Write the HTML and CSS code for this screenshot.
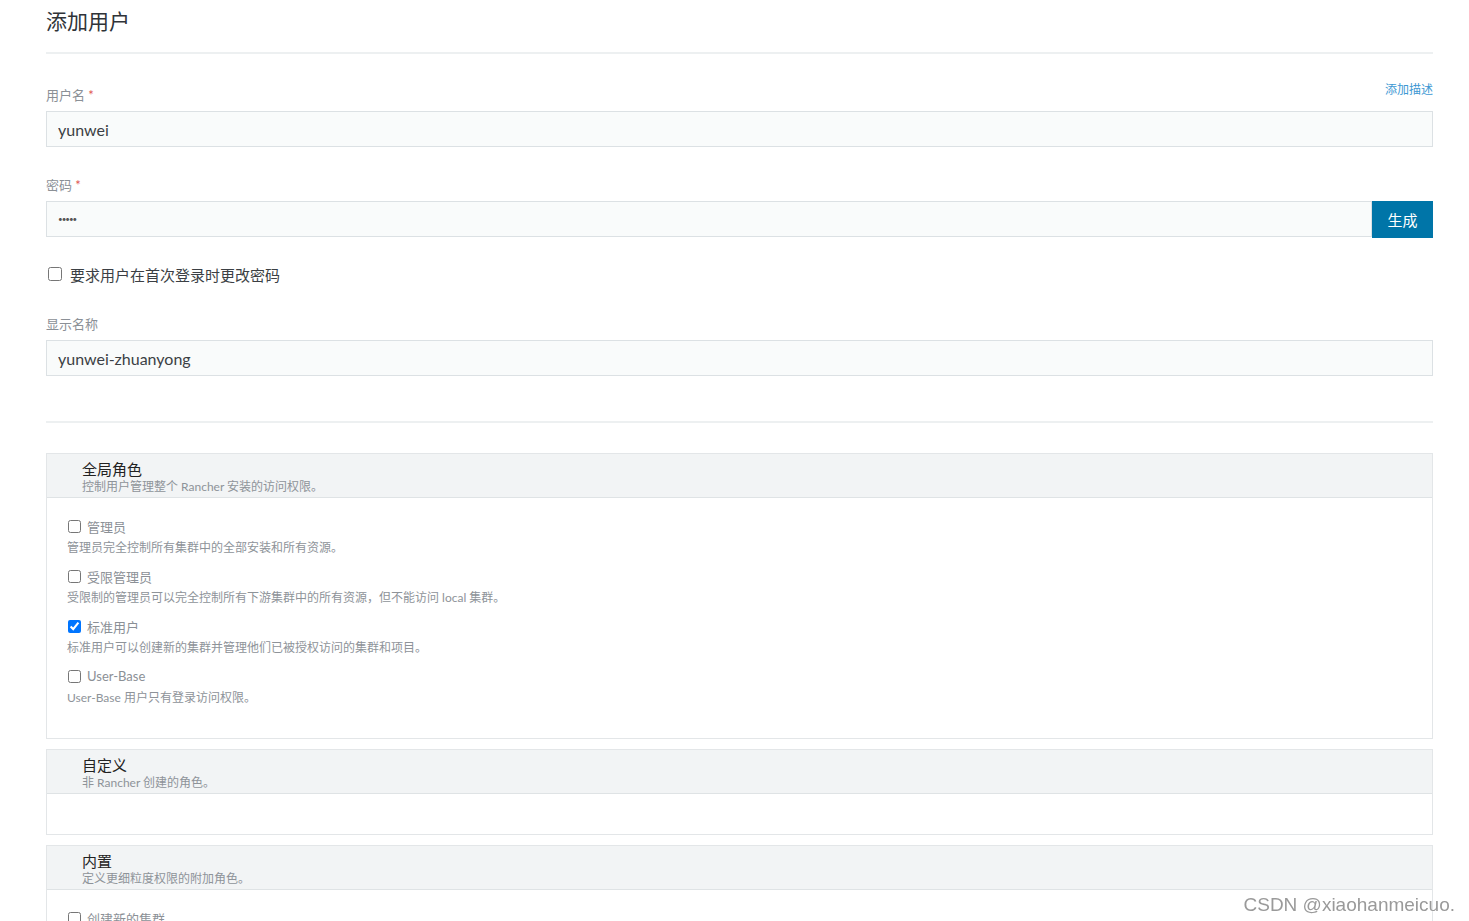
FILE: index.html
```html
<!DOCTYPE html>
<html lang="zh-CN">
<head>
<meta charset="UTF-8">
<meta name="viewport" content="width=device-width, initial-scale=1.0">
<title>添加用户</title>
<link rel="stylesheet" href="styles.css">
</head>
<body>
  <div class="page">
    <div class="header">
      <h1>添加用户</h1>
    </div>

    <div class="field first">
      <div class="labelRow">
        <label for="username">用户名 <span class="req">*</span></label>
        <a class="addDesc" href="#">添加描述</a>
      </div>
      <input class="textIn" type="text" id="username" value="yunwei">
    </div>

    <div class="field">
      <div class="labelRow">
        <label for="password">密码 <span class="req">*</span></label>
      </div>
      <div class="pwRow">
        <input class="textIn pwIn" type="password" id="password" value="12345">
        <button class="genBtn">生成</button>
      </div>
    </div>

    <div class="checkRow">
      <input type="checkbox" id="mustChange">
      <label for="mustChange">要求用户在首次登录时更改密码</label>
    </div>

    <div class="field afterCheck">
      <div class="labelRow">
        <label for="displayName">显示名称</label>
      </div>
      <input class="textIn" type="text" id="displayName" value="yunwei-zhuanyong">
    </div>

    <hr class="divider">

    <div class="roleBox">
      <div class="roleHead">
        <div class="roleTitle">全局角色</div>
        <div class="roleSub">控制用户管理整个 Rancher 安装的访问权限。</div>
      </div>
      <div class="roleBody">
        <div class="roleItem">
          <div class="roleCheck"><input type="checkbox" id="r1"><label for="r1">管理员</label></div>
          <div class="roleDesc">管理员完全控制所有集群中的全部安装和所有资源。</div>
        </div>
        <div class="roleItem">
          <div class="roleCheck"><input type="checkbox" id="r2"><label for="r2">受限管理员</label></div>
          <div class="roleDesc">受限制的管理员可以完全控制所有下游集群中的所有资源，但不能访问 local 集群。</div>
        </div>
        <div class="roleItem">
          <div class="roleCheck"><input type="checkbox" id="r3" checked><label for="r3">标准用户</label></div>
          <div class="roleDesc">标准用户可以创建新的集群并管理他们已被授权访问的集群和项目。</div>
        </div>
        <div class="roleItem">
          <div class="roleCheck"><input type="checkbox" id="r4"><label for="r4">User-Base</label></div>
          <div class="roleDesc">User-Base 用户只有登录访问权限。</div>
        </div>
      </div>
    </div>

    <div class="roleBox">
      <div class="roleHead">
        <div class="roleTitle">自定义</div>
        <div class="roleSub">非 Rancher 创建的角色。</div>
      </div>
      <div class="roleBody empty"></div>
    </div>

    <div class="roleBox">
      <div class="roleHead">
        <div class="roleTitle">内置</div>
        <div class="roleSub">定义更细粒度权限的附加角色。</div>
      </div>
      <div class="roleBody">
        <div class="roleItem">
          <div class="roleCheck"><input type="checkbox" id="b1"><label for="b1">创建新的集群</label></div>
          <div class="roleDesc">允许用户创建新的集群。</div>
        </div>
      </div>
    </div>
  </div>

  <div class="watermark">CSDN @xiaohanmeicuo.</div>
</body>
</html>
```

FILE: styles.css
```css
html, body {
  margin: 0;
  padding: 0;
  background: #fff;
}
body {
  font-family: Lato, "Noto Sans CJK SC", sans-serif;
  color: #3b3f44;
}
.page {
  height: 100vh;
  overflow: hidden;
  box-sizing: border-box;
  padding: 0 36px 0 46px;
}
.header {
  padding-top: 7px;
  border-bottom: 2px solid #edf0f1;
  padding-bottom: 17px;
}
.header h1 {
  margin: 0;
  font-size: 21px;
  line-height: 28px;
  font-weight: normal;
  color: #2f3338;
}

.field {
  margin-top: 29px;
}
.field.first {
  margin-top: 32px;
}
.field.afterCheck {
  margin-top: 31px;
}
.labelRow {
  display: flex;
  justify-content: space-between;
  align-items: flex-start;
  height: 18px;
  margin-bottom: 7px;
}
.labelRow label {
  font-size: 13px;
  line-height: 18px;
  color: #8b9096;
}
.req {
  color: #e0564f;
}
.addDesc {
  font-size: 12px;
  line-height: 14px;
  margin-top: -3px;
  color: #3d98d3;
  text-decoration: none;
}
.textIn {
  display: block;
  width: 100%;
  box-sizing: border-box;
  height: 36px;
  padding: 0 11px;
  border: 1px solid #dce1e4;
  background: #f9fbfb;
  font-family: Lato, "Noto Sans CJK SC", sans-serif;
  font-size: 16px;
  color: #3b3f44;
  outline: none;
}
.pwRow {
  display: flex;
}
.pwIn {
  flex: 1;
  font-size: 8px;
  letter-spacing: -1px;
  color: #555;
}
.genBtn {
  width: 61px;
  height: 37px;
  border: none;
  background: #0075a8;
  color: #fff;
  font-family: Lato, "Noto Sans CJK SC", sans-serif;
  font-size: 15px;
  cursor: pointer;
}

.checkRow {
  display: flex;
  align-items: center;
  margin-top: 26px;
  height: 20px;
}
.checkRow input {
  margin: 0 8px 0 2px;
  width: 14px;
  height: 14px;
}
.checkRow label {
  font-size: 15px;
  color: #3b3f44;
}

.divider {
  border: none;
  border-top: 2px solid #edf0f1;
  margin: 45px 0 30px;
}

.roleBox {
  border: 1px solid #e3e6e8;
  margin-bottom: 10px;
}
.roleHead {
  background: #f2f4f5;
  border-bottom: 1px solid #dfe3e5;
  padding: 6px 35px 2px;
}
.roleTitle {
  font-size: 15px;
  line-height: 19px;
  color: #222;
}
.roleSub {
  font-size: 12px;
  line-height: 16px;
  color: #8e9399;
}
.roleBody {
  padding: 18px 20px 32px;
}
.roleBody.empty {
  padding: 0;
  height: 40px;
}
.roleItem {
  margin-bottom: 10px;
}
.roleItem:last-child {
  margin-bottom: 0;
}
.roleCheck {
  display: flex;
  align-items: center;
  height: 20px;
}
.roleCheck input {
  margin: 0 6px 0 1px;
  width: 13px;
  height: 13px;
}
.roleCheck label {
  font-size: 13px;
  color: #8b9096;
}
.roleDesc {
  margin-top: 4px;
  font-size: 12px;
  line-height: 16px;
  color: #8e9399;
}

.watermark {
  position: fixed;
  right: 14px;
  bottom: 5px;
  font-family: "Liberation Sans", Arial, sans-serif;
  font-size: 19px;
  color: #9a9a9a;
  text-shadow: 0 0 2px #fff;
}
```
